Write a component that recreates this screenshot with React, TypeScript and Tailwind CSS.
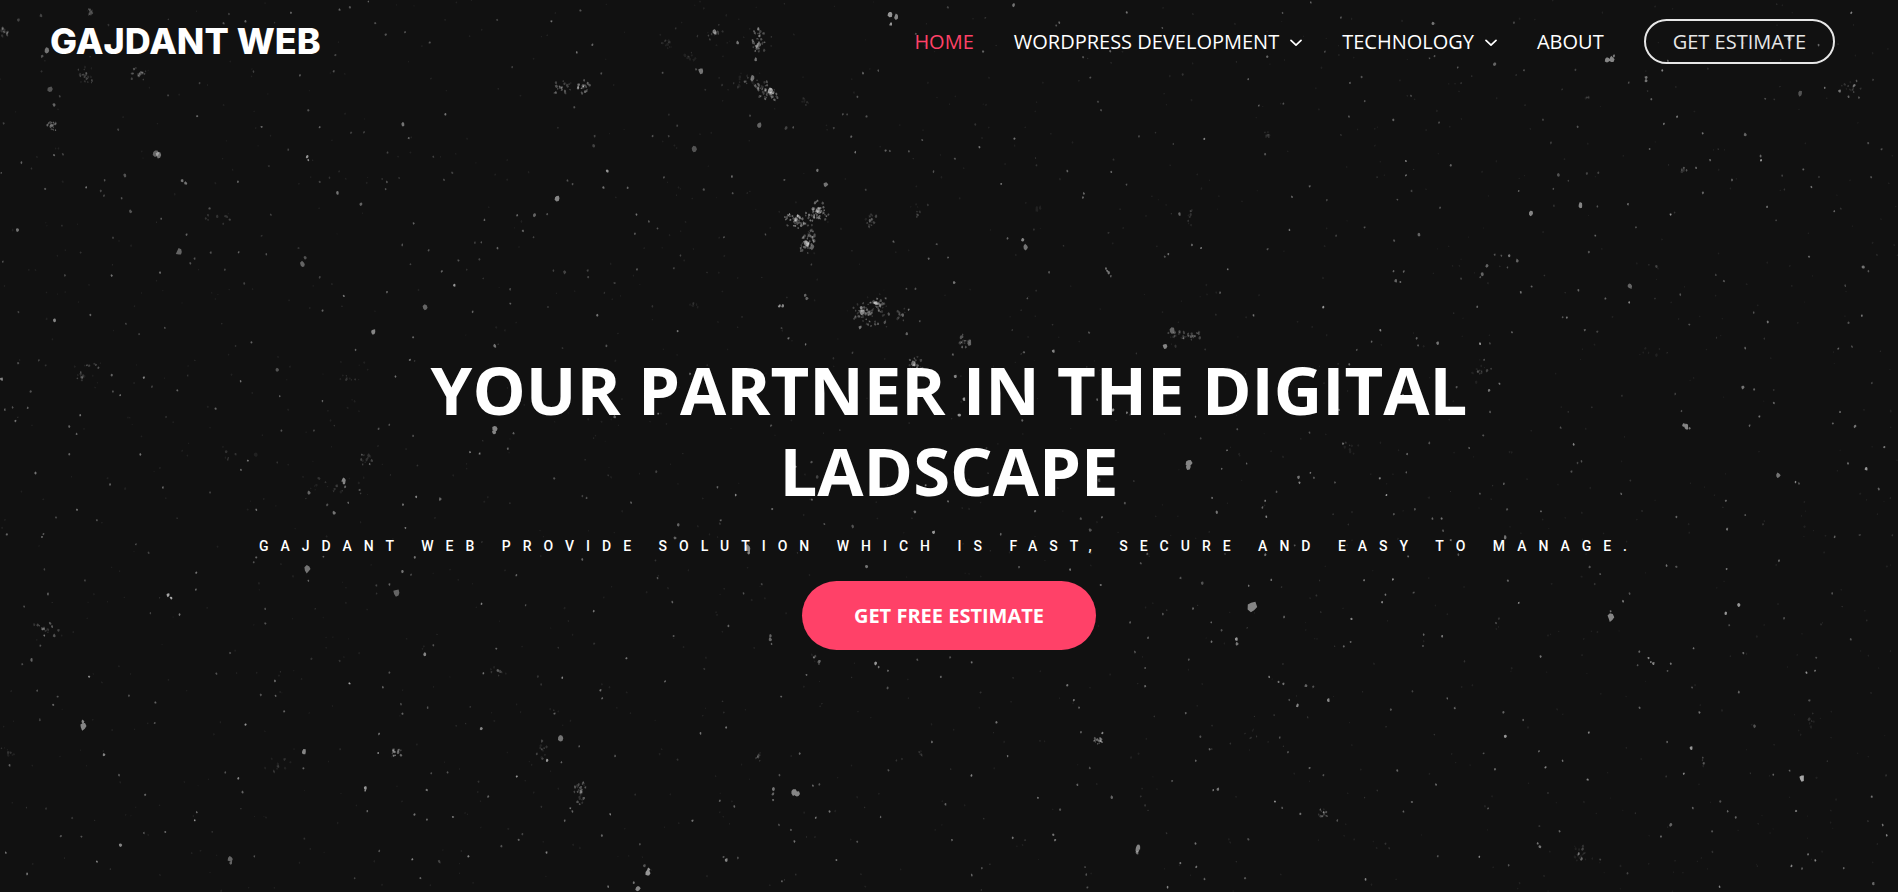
/*
 * Dust texture. The canvas is cut into tiles; each speck is "x,y,radius,brightness"
 * on a 1568 x 900 grid inside its tile, radius in canvas pixels, brightness 1 to 9.
 */
type Tile = { left: number; top: number; specks: string; clouds?: string };

const CANVAS_WIDTH = 1898;
const CANVAS_HEIGHT = 892;
const GRID_X = 632 / 1568;
const GRID_Y = 1 / 3;

/* Clouds are "x,y,spreadX,spreadY,count,brightness" on the same grid. */
const tiles: Tile[] = [
  {
    left: 0,
    top: 0,
    specks:
      "46,60,2,3 102,47,2,3 116,152,3,6 104,169,2,4 124,267,3,4 134,315,2,5 148,289,1,3 134,465,1,5 156,463,1,3 53,488,1,5 112,567,1,4 214,562,1,6 260,541,1,4 310,526,2,4 386,460,4,5 393,465,3,6 452,542,2,6 461,550,2,6 489,348,1,5 590,546,1,5 649,381,1,5 765,331,1,4 793,382,1,5 762,470,2,8 765,480,1,7 793,546,1,3 837,578,2,6 895,612,2,5 957,568,1,4 960,546,1,4 1000,373,2,6 1014,414,1,5 1105,343,1,6 1102,540,1,4 1122,518,1,3 1075,470,1,3 1202,660,1,5 1283,646,1,5 1326,646,2,5 1357,643,1,4 1382,595,3,7 1408,542,1,4 1421,552,1,4 1507,513,2,8 1497,563,1,6 1557,563,1,5 1473,437,2,3 1475,408,1,3 1425,322,1,4 1492,220,1,4 1431,157,1,6 1470,135,1,5 1368,64,1,6 1234,60,1,3 1440,32,1,4 1066,128,1,4 1005,97,1,4 957,104,1,4 931,70,1,4 914,5,1,5 842,29,1,5 868,22,1,4 722,38,1,6 568,42,1,3 609,64,1,5 555,70,1,4 828,213,1,4 832,165,1,3 744,226,1,5 629,215,1,3 495,249,1,3 417,286,1,3 293,389,1,3 324,634,2,4 400,656,1,5 520,626,1,4 570,659,1,3 672,644,1,3 445,756,4,5 463,704,1,5 281,713,1,3 277,827,1,6 397,818,1,5 483,776,1,4 472,790,1,4 523,758,1,4 592,757,1,5 661,763,1,4 757,774,2,4 751,793,3,5 43,690,2,6 7,785,1,4 161,826,1,3 558,809,1,3 606,850,1,3 793,832,1,3 853,888,1,6 960,876,1,5 1127,856,2,8 1096,814,1,5 1018,793,1,3 1026,670,1,5 998,735,1,4 1063,751,1,4 1178,728,1,3 1194,727,1,4 1234,745,1,5 1297,693,1,5 1324,712,1,3 1137,781,1,4 1189,778,1,3 1266,868,1,3 1373,812,1,3 1401,817,2,3 1458,811,1,3 1459,831,1,3 1525,849,1,3 1271,201,1,3 961,458,1,3 871,398,1,3 903,397,1,3 715,449,1,3 3,519,1,4 9,370,1,3 258,587,1,3 302,595,1,4 250,573,1,3",
    clouds: "15,97,14,16,14,4 212,225,24,30,22,3 344,225,22,20,18,4 226,35,10,12,12,4 129,377,12,18,18,5 1390,262,24,18,18,5 1450,260,15,20,20,6 540,650,30,20,8,2",
  },
  {
    left: 632,
    top: 0,
    specks:
      "640,42,3,8 656,50,3,7 642,73,2,8 205,96,3,6 262,128,2,6 171,213,3,6 159,208,1,4 299,235,3,6 343,273,3,8 307,178,2,6 316,375,3,5 154,448,3,4 293,347,1,4 947,15,2,6 1227,38,1,6 1060,68,1,5 1052,76,1,4 1316,84,1,4 1186,154,1,5 1119,172,1,4 871,154,1,5 704,102,1,4 573,219,1,5 611,212,1,4 559,291,1,4 523,343,1,4 534,343,1,3 582,350,1,4 544,410,1,5 554,457,1,6 629,452,1,5 640,453,1,4 687,454,1,5 720,420,1,4 862,441,1,6 949,416,1,6 1137,233,1,4 1156,305,1,3 1164,331,1,4 1529,238,1,5 1555,317,1,5 1420,417,1,7 1258,409,1,3 1343,432,1,3 801,476,1,4 748,515,1,4 916,552,1,6 1080,513,1,5 1189,515,1,5 1121,580,1,5 1119,592,1,5 1227,554,1,4 248,529,1,6 250,580,1,4 79,532,1,4 178,569,1,4 460,512,2,6 480,554,3,6 378,540,1,4 11,643,1,6 42,664,1,4 63,685,1,4 7,702,1,4 331,703,1,4 228,712,1,4 432,729,4,7 448,740,3,5 463,630,3,6 449,626,2,6 463,654,2,6 649,725,1,5 756,732,1,4 784,773,1,5 736,776,1,5 799,848,2,6 932,715,1,5 969,719,2,7 977,742,3,6 1183,818,2,6 1179,812,1,6 1176,805,1,6 1188,829,1,5 1035,817,1,4 1358,642,2,5 1412,744,1,8 1389,735,1,5 1331,762,1,6 1322,770,1,4 1478,808,1,6 1459,878,1,5 429,886,2,5 434,895,2,5 608,896,1,6 629,895,1,5 445,794,1,3 12,808,1,4 104,805,1,3 120,767,1,3 76,218,1,4 112,377,1,3 51,408,1,4 91,408,1,3 501,384,1,3 400,382,1,4 382,384,2,3 981,895,1,4 703,866,1,4 681,866,1,4 784,22,1,3 580,569,1,3",
    clouds: "205,100,22,26,15,3 314,125,16,40,40,5 145,178,16,20,12,2 280,245,34,22,18,3 320,265,30,25,26,4 345,282,18,24,28,5 405,660,30,24,50,6 460,635,26,30,50,6 445,690,14,30,18,4 437,732,28,25,36,5 592,660,14,28,22,3 90,130,20,20,14,2 428,305,10,12,8,2 707,635,8,25,7,3 1005,628,15,12,7,2 1385,640,8,40,10,3",
  },
  {
    left: 1264,
    top: 0,
    specks:
      "116,7,1,5 46,39,1,4 191,53,1,4 419,69,2,6 620,68,1,3 852,180,3,7 863,178,3,7 868,168,2,6 572,192,2,5 423,168,1,4 411,175,1,4 481,202,1,4 645,211,1,4 773,209,1,3 242,231,1,4 213,249,1,5 365,288,1,4 250,304,1,4 48,311,1,4 211,350,1,4 321,360,1,5 434,368,1,4 778,381,1,4 692,359,1,3 905,248,1,4 948,233,2,6 948,242,2,6 988,211,1,7 1002,183,1,5 961,297,1,5 1025,350,1,6 992,371,1,6 1088,400,1,6 1194,404,2,5 1243,296,1,4 1330,281,3,4 1391,263,1,6 1428,273,2,6 1464,257,2,6 1470,242,1,4 1450,290,1,5 1476,293,1,4 1457,38,1,7 1304,118,3,6 1376,136,1,5 1511,239,1,3 1499,430,1,4 1532,448,1,4 1506,531,1,4 1338,508,1,5 1358,561,1,6 1233,481,1,9 1232,468,1,5 1107,480,1,5 1072,504,1,5 1042,503,1,4 1048,512,1,4 957,447,1,5 1161,540,1,5 1089,579,1,5 1286,527,1,3 1248,621,1,6 1415,634,1,5 1271,661,1,3 1009,643,1,8 903,613,1,5 923,682,1,4 822,707,1,5 785,616,3,7 827,619,1,4 662,640,3,7 731,525,2,4 755,542,1,3 718,566,1,4 801,520,1,3 829,518,1,3 632,573,1,5 352,483,1,7 352,526,1,6 463,496,1,5 113,559,1,5 69,590,1,5 156,600,1,4 331,599,1,4 366,573,1,3 250,682,1,4 63,690,1,6 385,703,2,5 323,722,1,4 179,707,1,3 9,747,1,4 437,623,1,4 321,814,1,5 347,814,1,5 327,842,2,5 338,846,1,5 553,797,2,5 541,823,2,5 536,832,1,4 608,767,2,6 628,782,2,5 572,764,1,4 604,803,1,4 589,767,1,4 637,877,1,6 664,860,1,5 780,871,1,5 907,858,3,5 806,756,1,4 974,800,2,3 1141,843,1,4 1121,825,1,3 1352,770,1,5 1487,801,2,6 1500,814,1,4 1442,857,1,3 847,896,1,5 489,836,1,3 1033,884,1,4 3,463,1,4 151,155,1,4 8,170,1,5 712,429,1,3",
    clouds: "805,293,8,5,5,3 10,405,10,20,8,2 1040,508,16,8,5,3 1455,270,26,24,12,3",
  },
  {
    left: 0,
    top: 300,
    specks:
      "135,61,2,7 224,45,1,5 46,36,1,3 4,237,2,7 277,225,1,5 357,233,1,7 298,286,1,6 280,274,1,4 244,203,1,4 440,271,1,5 597,244,1,6 624,127,1,5 694,289,1,5 800,303,1,5 800,31,1,5 926,96,3,7 882,150,1,5 1055,23,3,5 1173,35,1,5 1266,11,1,5 1228,138,2,6 1482,46,1,6 1025,112,1,5 1017,180,1,6 981,230,1,6 688,210,2,4 535,326,1,5 199,345,1,6 172,380,1,5 190,402,1,5 12,329,1,5 38,363,1,6 69,324,1,5 31,322,1,4 172,463,1,5 348,463,1,6 88,519,1,6 273,554,1,5 404,562,1,6 191,629,1,6 636,629,1,6 598,510,1,5 615,482,1,6 898,464,1,4 917,492,1,5 853,540,3,7 854,549,2,7 856,560,1,5 767,578,2,5 829,638,2,6 812,615,1,4 864,608,1,5 892,570,1,4 1000,614,1,6 1033,590,1,7 1092,597,2,5 1228,386,3,7 1226,396,3,7 1274,400,1,5 1260,446,1,5 1166,457,1,7 1190,461,1,7 939,386,1,4 966,374,1,4 1025,407,1,4 1375,535,1,4 1455,594,1,4 1445,588,1,3 1566,608,1,5 1006,684,1,6 17,704,1,5 104,711,1,6 108,702,1,4 337,733,1,4 636,772,1,5 629,787,1,4 802,770,1,5 763,807,4,6 765,842,1,5 998,814,2,6 1029,772,1,6 1020,824,1,3 1281,826,1,5 1445,778,1,5 487,818,1,6 486,869,1,5 211,841,1,3 119,882,1,5 417,885,2,9 425,894,2,9 984,878,4,5 966,853,1,5 934,856,1,3 521,577,1,3 240,661,1,4 139,652,1,3 110,808,1,3 369,758,1,3 76,275,1,4 45,189,1,4 96,181,1,3 409,83,1,4 345,102,1,3 312,71,1,3 377,260,1,3 698,391,1,4 779,391,1,3 1525,350,2,5 1504,138,1,4",
    clouds: "200,228,10,14,14,3 230,195,18,10,8,3 860,235,30,14,9,2 910,480,20,26,12,3 830,560,60,30,12,2 635,462,12,12,5,2 570,468,14,20,5,2",
  },
  {
    left: 632,
    top: 300,
    specks:
      "366,18,2,8 374,18,2,7 113,93,1,6 388,115,1,6 431,133,1,6 371,84,1,3 569,24,2,7 570,36,3,7 566,82,2,6 605,8,2,6 610,72,1,5 672,46,2,5 686,29,1,6 714,64,1,4 682,101,2,5 837,127,3,5 817,112,2,4 973,157,1,5 1045,154,2,7 1340,92,3,5 1322,139,3,7 1134,98,1,4 1542,46,1,6 796,164,1,5 802,229,2,7 824,297,2,8 812,345,2,8 697,190,3,6 1154,299,1,5 1193,330,2,8 1228,338,1,6 65,341,1,6 345,377,1,4 144,221,1,6 547,158,1,3 406,500,1,7 446,486,1,4 459,530,2,3 729,556,1,6 1135,531,2,7 1159,541,2,3 1381,489,4,7 1379,500,3,7 1476,451,1,6 1525,491,1,5 1463,506,1,5 1439,593,1,6 1451,636,2,6 1000,633,1,5 1223,609,1,4 784,604,1,5 702,636,2,6 446,599,1,5 348,627,1,6 257,585,1,7 212,562,1,5 220,661,1,5 114,675,2,5 107,714,2,5 288,745,4,7 290,758,2,7 548,680,2,4 748,697,2,8 915,703,1,5 1137,690,2,4 477,672,1,4 582,800,2,6 1087,809,1,6 63,834,1,4 1113,656,1,4 1166,652,1,5 1278,762,1,4 1262,790,1,4 1163,855,1,6 1361,834,1,4 1415,850,2,4 1530,857,1,6 968,362,1,5 1398,350,1,5 1411,415,1,3 277,880,1,4 960,801,1,4 322,852,1,3 60,515,1,3 1502,388,1,4 1564,622,1,5",
    clouds: "590,40,45,40,65,4 610,12,24,14,20,5 670,45,14,20,10,4 825,122,20,20,16,4 700,195,22,24,30,4 1380,105,32,18,22,4 1345,110,20,28,14,3 150,17,18,14,8,2",
  },
  {
    left: 1264,
    top: 300,
    specks:
      "147,22,1,8 289,90,1,7 267,125,1,5 379,115,1,5 382,136,1,4 431,129,2,6 536,131,1,8 560,130,1,3 529,20,1,5 615,97,1,5 751,52,1,6 741,52,1,4 796,90,1,5 906,7,1,7 1055,74,1,4 1194,144,1,5 1250,66,1,6 1215,38,1,4 1450,68,1,4 1483,47,1,6 1459,140,1,4 1425,146,1,5 1188,262,2,6 1216,269,1,5 1508,249,1,3 1265,309,1,5 1229,350,1,6 1205,377,1,5 1041,376,2,7 1048,381,3,7 1056,385,1,6 1411,370,1,5 1466,379,2,6 1429,336,1,5 1539,441,1,6 1449,490,1,6 1494,506,2,8 1275,526,3,6 1319,546,1,7 1327,550,1,4 1525,567,1,5 1146,602,1,5 1194,645,1,4 1023,651,1,5 1149,688,1,6 1148,807,1,6 1416,710,1,5 1478,705,1,3 999,797,1,6 1023,800,1,4 1278,782,1,5 886,581,1,5 768,433,1,7 788,484,1,4 778,489,1,3 763,515,1,4 736,383,1,4 558,271,2,6 584,251,1,6 546,180,1,4 478,261,1,4 561,336,1,4 509,444,1,5 410,429,1,4 355,462,1,5 353,517,1,5 287,535,1,7 304,585,1,8 196,431,1,6 113,398,1,4 86,532,2,6 88,548,1,7 115,519,1,6 124,534,1,4 3,602,1,7 6,650,1,7 31,575,1,4 176,547,1,4 536,581,1,5 595,552,1,5 603,628,1,4 687,634,1,5 418,656,1,5 441,656,1,6 444,692,1,4 598,712,2,6 463,720,1,6 482,764,1,4 358,769,1,5 76,736,1,4 3,764,1,6 320,838,1,8 248,841,1,7 301,884,1,6 18,840,1,6 371,878,1,4 605,842,1,5 834,822,1,4 808,801,1,4 907,881,1,4 1410,880,1,4 1036,333,1,4 1020,282,1,3 345,285,1,6 186,330,1,6 211,193,1,5 230,150,1,4 322,643,1,4 374,628,1,4 544,406,1,4 827,95,1,3",
    clouds: "540,215,26,35,14,3 215,445,20,20,10,2 960,155,30,15,5,2",
  },
  {
    left: 0,
    top: 600,
    specks:
      "60,20,1,4 445,44,1,6 373,40,1,3 658,26,1,4 658,70,1,4 1195,11,1,7 1304,16,1,4 1473,34,1,6 110,107,1,6 135,106,2,4 129,80,1,5 100,137,1,4 78,179,2,5 55,193,1,4 221,230,1,7 92,272,1,4 143,290,1,4 132,315,1,5 320,287,1,4 386,308,1,5 205,364,2,7 206,378,4,7 258,464,2,7 99,359,1,3 384,369,1,4 609,373,1,8 682,243,1,6 684,287,1,5 647,285,1,4 537,221,1,4 571,159,1,4 867,250,1,9 950,262,1,6 966,218,1,4 1054,162,2,7 1075,136,1,4 1199,220,1,6 1231,146,1,5 1395,234,1,7 1490,271,1,6 1494,295,1,5 1554,175,1,6 1376,341,1,5 1194,386,2,7 1391,415,3,6 1357,482,2,8 1437,439,1,5 1282,530,1,8 1393,487,1,5 940,402,1,6 938,459,1,7 995,313,1,4 998,341,1,5 1061,323,1,4 754,456,3,7 753,505,1,5 705,334,1,5 906,564,2,8 906,572,1,8 591,535,1,7 602,576,1,5 559,517,1,4 295,526,1,4 360,585,1,5 24,496,1,5 488,637,1,5 483,661,1,8 410,696,1,6 357,699,1,4 299,735,2,7 240,785,1,7 202,710,1,4 151,709,1,4 14,758,1,6 67,822,1,6 571,777,3,5 573,788,2,5 631,769,1,4 1059,570,1,6 1211,590,1,5 1028,643,1,6 1059,658,1,5 1124,651,1,6 1162,769,1,7 1023,778,1,7 1090,785,2,3 941,753,1,4 1043,834,1,5 1287,720,1,5 1356,757,1,7 1514,643,1,7 1493,707,1,5 1401,662,1,5 1415,625,1,6 1420,634,1,5 1509,860,1,6 911,633,1,5 880,835,1,3 1244,739,1,4 1526,468,1,4 1296,702,1,3 1070,520,1,4 1110,517,1,4",
    clouds: "110,85,34,20,16,4 988,457,14,14,16,5 1440,575,14,38,38,4 1345,450,18,26,12,3 1235,210,22,18,12,3 20,455,18,40,8,2 690,498,35,22,10,2",
  },
  {
    left: 632,
    top: 600,
    specks:
      "100,6,1,5 239,78,1,5 103,108,1,4 343,108,2,5 343,118,2,5 346,132,1,5 82,244,1,6 451,172,1,6 465,184,2,5 433,225,1,5 605,190,2,8 612,202,1,6 635,212,1,6 789,172,1,4 843,187,1,6 766,231,1,5 634,264,1,4 708,179,1,4 370,290,1,5 170,400,1,6 234,383,1,6 416,461,1,5 366,525,1,4 351,567,2,6 350,582,2,5 350,600,1,5 401,577,4,7 410,582,3,7 449,557,1,6 465,553,1,4 490,634,1,6 456,653,1,6 218,602,1,5 254,619,1,5 150,662,1,6 403,724,1,6 394,690,1,4 365,675,1,4 234,780,2,7 227,771,1,4 263,774,1,4 41,808,2,8 39,820,3,8 30,797,2,4 14,865,3,7 4,848,1,6 20,733,1,4 372,844,1,5 507,780,1,6 617,651,1,5 778,613,1,5 842,526,1,7 744,426,1,6 904,368,1,6 932,468,1,6 1007,593,1,6 1062,629,1,4 1105,554,1,5 1136,504,1,4 1114,396,1,5 1167,399,1,7 1109,323,1,5 1096,301,1,6 1080,256,1,6 1273,259,1,6 1273,204,1,4 1248,156,1,4 1280,113,1,5 1236,67,1,5 1317,42,1,5 1392,26,1,6 1437,67,1,6 1438,125,1,6 1463,91,1,4 1500,118,2,8 1501,132,2,6 1538,21,5,7 1381,179,1,4 1374,340,1,5 1410,410,1,4 1433,448,1,5 1399,482,1,5 1442,570,1,7 1453,568,2,6 1340,543,1,4 1190,591,2,5 1045,704,1,6 1050,720,1,6 1256,740,3,7 1254,749,3,7 1253,758,2,6 1398,730,1,6 1360,789,1,6 1400,801,1,6 1329,862,1,7 1420,837,1,5 1529,718,1,4 1127,824,1,4 1130,862,1,4 1124,801,1,3 945,713,1,6 794,720,1,5 843,825,1,5 868,805,1,4 1521,835,1,4 559,725,1,4 636,511,1,4",
    clouds: "1159,421,13,11,22,5 312,470,10,14,8,3 715,463,6,12,6,2 455,185,22,20,8,3 1540,395,14,26,6,2",
  },
  {
    left: 1264,
    top: 600,
    specks:
      "293,6,1,8 50,51,1,6 217,57,1,7 215,126,1,5 198,139,1,5 396,104,1,5 442,109,1,6 394,138,1,4 632,9,1,8 576,70,1,4 686,169,1,6 860,52,4,7 860,34,1,6 891,4,1,6 1146,41,2,8 1178,15,2,8 1154,76,1,4 1066,145,1,6 1189,159,1,5 954,174,1,7 960,186,1,7 966,191,2,7 1009,191,1,6 1001,213,1,4 931,155,1,5 927,196,1,4 1290,55,1,4 1456,118,1,4 1370,173,1,4 1346,218,1,8 1367,212,1,6 1062,263,1,4 1178,276,1,5 1080,337,1,6 932,323,1,5 1353,301,1,4 13,231,1,7 36,246,1,6 48,251,1,6 104,257,2,5 122,260,1,4 160,300,2,7 83,317,2,7 63,300,1,4 368,274,1,3 455,296,1,5 473,325,1,5 315,329,1,4 594,337,1,5 643,360,1,5 599,409,2,8 806,398,1,7 682,454,1,5 741,482,1,6 698,502,1,7 803,539,1,7 1060,445,2,8 1000,426,1,5 1089,473,1,4 1041,521,1,7 1217,379,2,4 1335,535,3,9 1304,512,1,5 1264,524,1,5 1508,590,1,6 1320,633,1,6 1064,624,1,5 1132,605,1,4 1150,634,1,5 1170,652,1,5 1009,675,2,5 985,710,1,6 1112,694,1,4 1535,675,1,6 1545,706,1,7 1350,763,1,6 1368,781,1,7 1309,798,1,7 1335,806,1,4 1438,805,1,5 1512,850,2,5 1130,860,1,7 573,508,1,5 427,554,1,6 331,511,1,5 367,606,1,5 346,634,1,5 556,625,1,5 113,504,1,5 147,526,1,4 27,605,1,8 45,624,1,4 90,642,1,6 182,661,1,4 252,838,1,7 534,770,1,7 431,769,1,4 607,796,1,4 679,730,1,6 684,740,2,6 788,777,2,5 781,761,1,6 790,747,2,3 733,694,1,5 834,779,1,3 902,820,1,3 545,460,1,4 60,456,1,4 39,413,1,4",
    clouds: "148,637,12,14,18,4 788,765,18,30,14,2 1360,365,10,30,6,2 1090,490,8,10,5,3",
  },
];

/* Painted radius for each radius step in the data. */
const grainRadius = [0, 1.1, 1.6, 2.6, 3.4, 5];

/* Small seeded generator, so that the texture is the same on every render. */
function createRandom(seed: number) {
  let state = seed;
  return () => {
    state = (state * 1664525 + 1013904223) % 4294967296;
    return state / 4294967296;
  };
}

const round = (value: number) => Math.round(value * 10) / 10;

function buildDust() {
  const random = createRandom(77);
  const layers: string[] = Array.from({ length: 10 }, () => "");

  const addGrain = (x: number, y: number, radius: number, level: number) => {
    const corners = 7;
    const points: string[] = [];
    for (let i = 0; i < corners; i += 1) {
      const angle = (i / corners) * Math.PI * 2;
      const reach = radius * (0.7 + random() * 0.6);
      points.push(`${round(x + Math.cos(angle) * reach * 0.9)} ${round(y + Math.sin(angle) * reach * 1.1)}`);
    }
    layers[level] += `M${points.join("L")}Z`;
  };

  for (const tile of tiles) {
    for (const speck of tile.specks.split(" ")) {
      const [x, y, radius, level] = speck.split(",").map(Number);
      addGrain(tile.left + x * GRID_X, tile.top + y * GRID_Y, grainRadius[radius], level);
    }
    for (const cloud of (tile.clouds ?? "").split(" ").filter(Boolean)) {
      const [x, y, spreadX, spreadY, count, level] = cloud.split(",").map(Number);
      for (let i = 0; i < count; i += 1) {
        const angle = random() * Math.PI * 2;
        const distance = random() * 1.1;
        addGrain(
          tile.left + (x + Math.cos(angle) * distance * spreadX) * GRID_X,
          tile.top + (y + Math.sin(angle) * distance * spreadY) * GRID_Y,
          0.7 + random() * 0.8,
          Math.max(1, level - Math.floor(random() * 3)),
        );
      }
    }
  }

  for (let i = 0; i < 1500; i += 1) {
    addGrain(random() * CANVAS_WIDTH, random() * CANVAS_HEIGHT, 0.6 + random() * 0.5, random() < 0.8 ? 1 : 2);
  }
  return layers;
}

const dustLayers = buildDust();

function DustBackground() {
  return (
    <svg
      aria-hidden="true"
      className="absolute inset-0 h-full w-full"
      viewBox={`0 0 ${CANVAS_WIDTH} ${CANVAS_HEIGHT}`}
      preserveAspectRatio="xMidYMid slice"
    >
      {dustLayers.map((path, level) => (
        <path key={level} d={path} fill="#ffffff" fillOpacity={level * 0.07} />
      ))}
    </svg>
  );
}

type NavItem = { label: string; active?: boolean; hasMenu?: boolean };

const navItems: NavItem[] = [
  { label: "HOME", active: true },
  { label: "WORDPRESS DEVELOPMENT", hasMenu: true },
  { label: "TECHNOLOGY", hasMenu: true },
  { label: "ABOUT" },
];

function Header() {
  return (
    <header className="flex h-[82px] items-center justify-between pr-[63px] pl-[50px]">
      <a href="#home" className="font-['Inter',sans-serif] text-[36px] leading-none font-extrabold">
        GAJDANT WEB
      </a>
      <nav aria-label="Main" className="flex items-center gap-10 text-[20px] leading-[25px]">
        {navItems.map((item) => (
          <a
            key={item.label}
            href="#"
            aria-current={item.active ? "page" : undefined}
            className={item.active ? "text-[#ff4168]" : "flex items-center gap-[11px] text-white"}
          >
            {item.label}
            {item.hasMenu && (
              <svg aria-hidden="true" className="mt-1 h-2 w-3" viewBox="0 0 12 8" fill="none" stroke="currentColor" strokeWidth="1.7">
                <path d="M1 1.4 6 6.2 11 1.4" strokeLinecap="round" strokeLinejoin="round" />
              </svg>
            )}
          </a>
        ))}
        <a href="#estimate" className="rounded-full border-2 border-white px-[27px] py-2 opacity-90">
          GET ESTIMATE
        </a>
      </nav>
    </header>
  );
}

export default function App() {
  return (
    <div className="relative isolate min-h-screen overflow-hidden bg-[#111111] font-['Open_Sans','Noto_Sans',sans-serif] text-white">
      <DustBackground />
      <div className="relative">
        <Header />
        <main className="flex flex-col items-center px-6 pt-[267px] pb-16 text-center">
          <h1 className="max-w-[1200px] text-[67px] leading-[81px] font-bold">YOUR PARTNER IN THE DIGITAL LADSCAPE</h1>
          <p className="py-[23px] font-['Roboto',sans-serif] text-[14px] leading-6 font-medium tracking-[12px]">
            GAJDANT WEB PROVIDE SOLUTION WHICH IS FAST, SECURE AND EASY TO MANAGE.
          </p>
          <a href="#estimate" className="rounded-full bg-[#ff4168] px-[52px] py-5 text-[20px] leading-[29px] font-bold">
            GET FREE ESTIMATE
          </a>
        </main>
      </div>
    </div>
  );
}
